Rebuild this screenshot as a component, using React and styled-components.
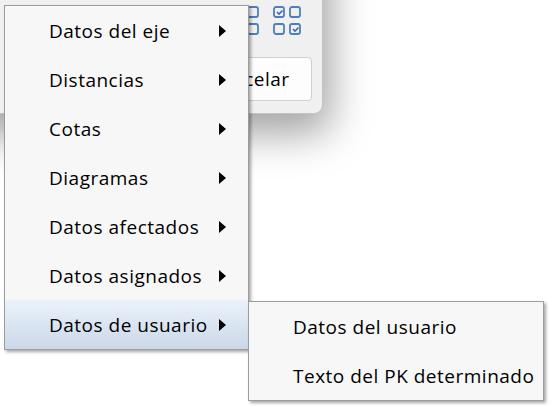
import React from 'react';
import styled, { createGlobalStyle } from 'styled-components';

const GlobalStyle = createGlobalStyle`
  html, body {
    margin: 0;
    padding: 0;
    background: #ffffff;
    font-family: "Open Sans", "Noto Sans", "Liberation Sans", sans-serif;
  }
`;

const menuItems = [
  'Datos del eje',
  'Distancias',
  'Cotas',
  'Diagramas',
  'Datos afectados',
  'Datos asignados',
  'Datos de usuario',
];

const subItems = ['Datos del usuario', 'Texto del PK determinado'];

const Desktop = styled.div`
  position: relative;
  width: 555px;
  height: 407px;
  overflow: hidden;
  background: #ffffff;
`;

// the dialog window behind the menu, mostly off screen
const Dialog = styled.div`
  position: absolute;
  left: -200px;
  top: -120px;
  width: 523px;
  height: 234px;
  box-sizing: border-box;
  background: #f0f0f0;
  border: 1px solid #c4c4c4;
  border-radius: 9px;
  box-shadow: 0 12px 40px 8px rgba(0, 0, 0, 0.36);
  display: flex;
  flex-direction: column;
  justify-content: flex-end;
  align-items: flex-end;
  padding: 0 10px 12px 0;
`;

const IconRow = styled.div`
  display: flex;
  gap: 14px;
  margin-right: 11px;
  margin-bottom: 21px;
`;

const Button = styled.button`
  width: 126px;
  height: 44px;
  box-sizing: border-box;
  background: #fdfdfd;
  border: 1px solid #d0d0d0;
  border-radius: 4px;
  font-family: inherit;
  font-size: 19px;
  letter-spacing: 0.5px;
  color: #000;
  padding: 0;
`;

const Menu = styled.div`
  position: absolute;
  left: ${(p) => p.$left}px;
  top: ${(p) => p.$top}px;
  width: ${(p) => p.$width}px;
  box-sizing: border-box;
  background: #f7f7f7;
  border: 1px solid #9c9c9c;
  box-shadow: 2px 2px 3px rgba(0, 0, 0, 0.35);
  display: flex;
  flex-direction: column;
`;

const Item = styled.div`
  height: 49px;
  display: flex;
  align-items: center;
  padding-left: ${(p) => p.$indent}px;
  font-size: 19px;
  letter-spacing: 0.5px;
  color: #000;
  background: ${(p) =>
    p.$active ? 'linear-gradient(to bottom, #ebf2fb, #cbd8e8)' : 'transparent'};
`;

const Label = styled.span`
  flex: 0 0 170px;
  white-space: nowrap;
`;

const Arrow = styled.span`
  width: 0;
  height: 0;
  border-top: 6px solid transparent;
  border-bottom: 6px solid transparent;
  border-left: 7px solid #000;
`;

function CheckGroup({ checked }) {
  const cells = [
    [1, 1],
    [17, 1],
    [1, 18],
    [17, 18],
  ];
  return (
    <svg width="28" height="30" viewBox="0 0 28 30">
      {cells.map(([x, y], i) => (
        <g key={i}>
          <rect
            x={x}
            y={y}
            width="10"
            height="10"
            rx="2"
            fill="none"
            stroke="#4d7fbd"
            strokeWidth="1.8"
          />
          {checked.includes(i) && (
            <path
              d={`M${x + 3} ${y + 5} l2 2 l3.5 -3.5`}
              fill="none"
              stroke="#3a6aa8"
              strokeWidth="1.6"
            />
          )}
        </g>
      ))}
    </svg>
  );
}

export default function App() {
  return (
    <>
      <GlobalStyle />
      <Desktop>
        <Dialog>
          <IconRow>
            <CheckGroup checked={[0]} />
            <CheckGroup checked={[0, 3]} />
          </IconRow>
          <Button>Cancelar</Button>
        </Dialog>

        <Menu $left={4} $top={5} $width={245}>
          {menuItems.map((label, i) => (
            <Item key={label} $indent={44} $active={i === menuItems.length - 1}>
              <Label>{label}</Label>
              <Arrow />
            </Item>
          ))}
        </Menu>

        <Menu $left={248} $top={301} $width={296}>
          {subItems.map((label) => (
            <Item key={label} $indent={44}>
              {label}
            </Item>
          ))}
        </Menu>
      </Desktop>
    </>
  );
}
